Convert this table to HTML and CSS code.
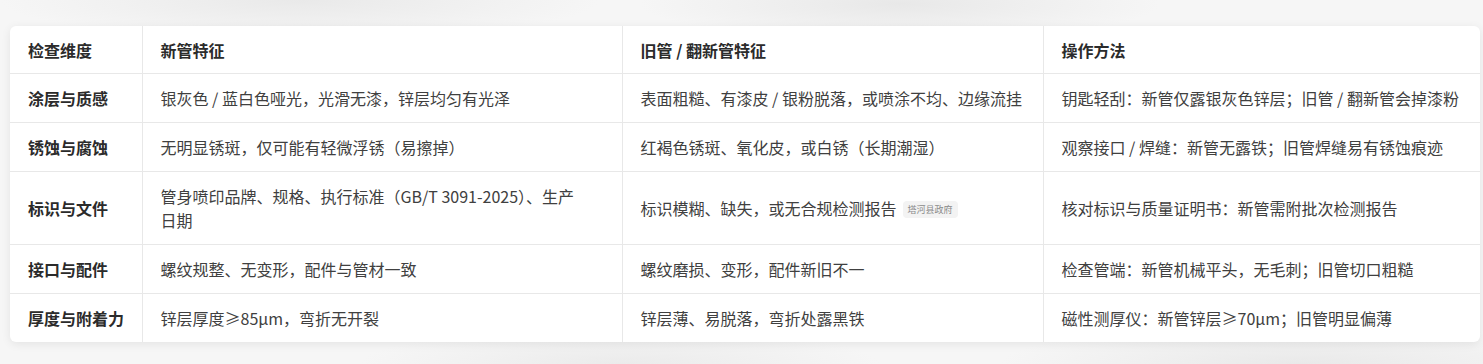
FILE: index.html
```html
<!DOCTYPE html>
<html lang="zh-CN">
<head>
<meta charset="utf-8">
<title>镀锌管新旧鉴别</title>
<link rel="stylesheet" href="styles.css">
</head>
<body>
<div class="page">
  <div class="card">
    <table class="grid">
      <colgroup>
        <col class="c1"><col class="c2"><col class="c3"><col class="c4">
      </colgroup>
      <thead>
        <tr><th>检查维度</th><th>新管特征</th><th>旧管 / 翻新管特征</th><th>操作方法</th></tr>
      </thead>
      <tbody>
        <tr><td class="dim">涂层与质感</td><td>银灰色 / 蓝白色哑光，光滑无漆，锌层均匀有光泽</td><td>表面粗糙、有漆皮 / 银粉脱落，或喷涂不均、边缘流挂</td><td>钥匙轻刮：新管仅露银灰色锌层；旧管 / 翻新管会掉漆粉</td></tr>
        <tr><td class="dim">锈蚀与腐蚀</td><td>无明显锈斑，仅可能有轻微浮锈（易擦掉）</td><td>红褐色锈斑、氧化皮，或白锈（长期潮湿）</td><td>观察接口 / 焊缝：新管无露铁；旧管焊缝易有锈蚀痕迹</td></tr>
        <tr><td class="dim">标识与文件</td><td>管身喷印品牌、规格、执行标准（GB/T 3091-2025）、生产<span class="keep">日期</span></td><td>标识模糊、缺失，或无合规检测报告<span class="tag">塔河县政府</span></td><td>核对标识与质量证明书：新管需附批次检测报告</td></tr>
        <tr><td class="dim">接口与配件</td><td>螺纹规整、无变形，配件与管材一致</td><td>螺纹磨损、变形，配件新旧不一</td><td>检查管端：新管机械平头，无毛刺；旧管切口粗糙</td></tr>
        <tr><td class="dim">厚度与附着力</td><td>锌层厚度≥85μm，弯折无开裂</td><td>锌层薄、易脱落，弯折处露黑铁</td><td>磁性测厚仪：新管锌层≥70μm；旧管明显偏薄</td></tr>
      </tbody>
    </table>
  </div>
</div>
</body>
</html>
```

FILE: styles.css
```css
html, body {
  margin: 0;
  padding: 0;
}
body {
  width: 1483px;
  height: 364px;
  overflow: hidden;
  font-family: "Noto Sans CJK SC", "Noto Sans", sans-serif;
  background:
    radial-gradient(ellipse 300px 40px at 300px 0px, #e9e9e9, rgba(233,233,233,0)),
    radial-gradient(ellipse 260px 36px at 900px 4px, #e8e8e8, rgba(232,232,232,0)),
    radial-gradient(ellipse 300px 40px at 1300px 364px, #e9e9e9, rgba(233,233,233,0)),
    radial-gradient(ellipse 260px 36px at 620px 364px, #ebebeb, rgba(235,235,235,0)),
    #f6f6f6;
}
.page {
  padding: 26px 3px 0 10px;
}
.card {
  width: 1470px;
  background: #fff;
  border-radius: 6px;
  box-shadow: 0 2px 10px rgba(0, 0, 0, 0.08);
  overflow: hidden;
}
.grid {
  width: 100%;
  border-collapse: collapse;
  table-layout: fixed;
  font-size: 16px;
  line-height: 24px;
  color: #404040;
}
.c1 { width: 132px; }
.c2 { width: 480px; }
.c3 { width: 421px; }
.c4 { width: 437px; }
.grid th,
.grid td {
  text-align: left;
  vertical-align: middle;
  padding: 12px 18px 12px 18px;
  border-right: 1px solid #e8e8e8;
  border-bottom: 1px solid #e8e8e8;
}
.grid th:last-child,
.grid td:last-child {
  border-right: none;
}
.grid tbody tr:last-child td {
  border-bottom: none;
}
.grid th {
  font-weight: 700;
  color: #2b2b2b;
  padding-top: 12px;
  padding-bottom: 11px;
}
.grid td.dim {
  font-weight: 700;
  color: #2b2b2b;
  white-space: nowrap;
  padding-right: 10px;
}
.keep {
  white-space: nowrap;
}
.tag {
  display: inline-block;
  margin-left: 6px;
  padding: 0 5px;
  font-size: 9px;
  line-height: 17px;
  color: #8a8a8a;
  background: #f3f3f3;
  border-radius: 4px;
  vertical-align: 2px;
}
```
